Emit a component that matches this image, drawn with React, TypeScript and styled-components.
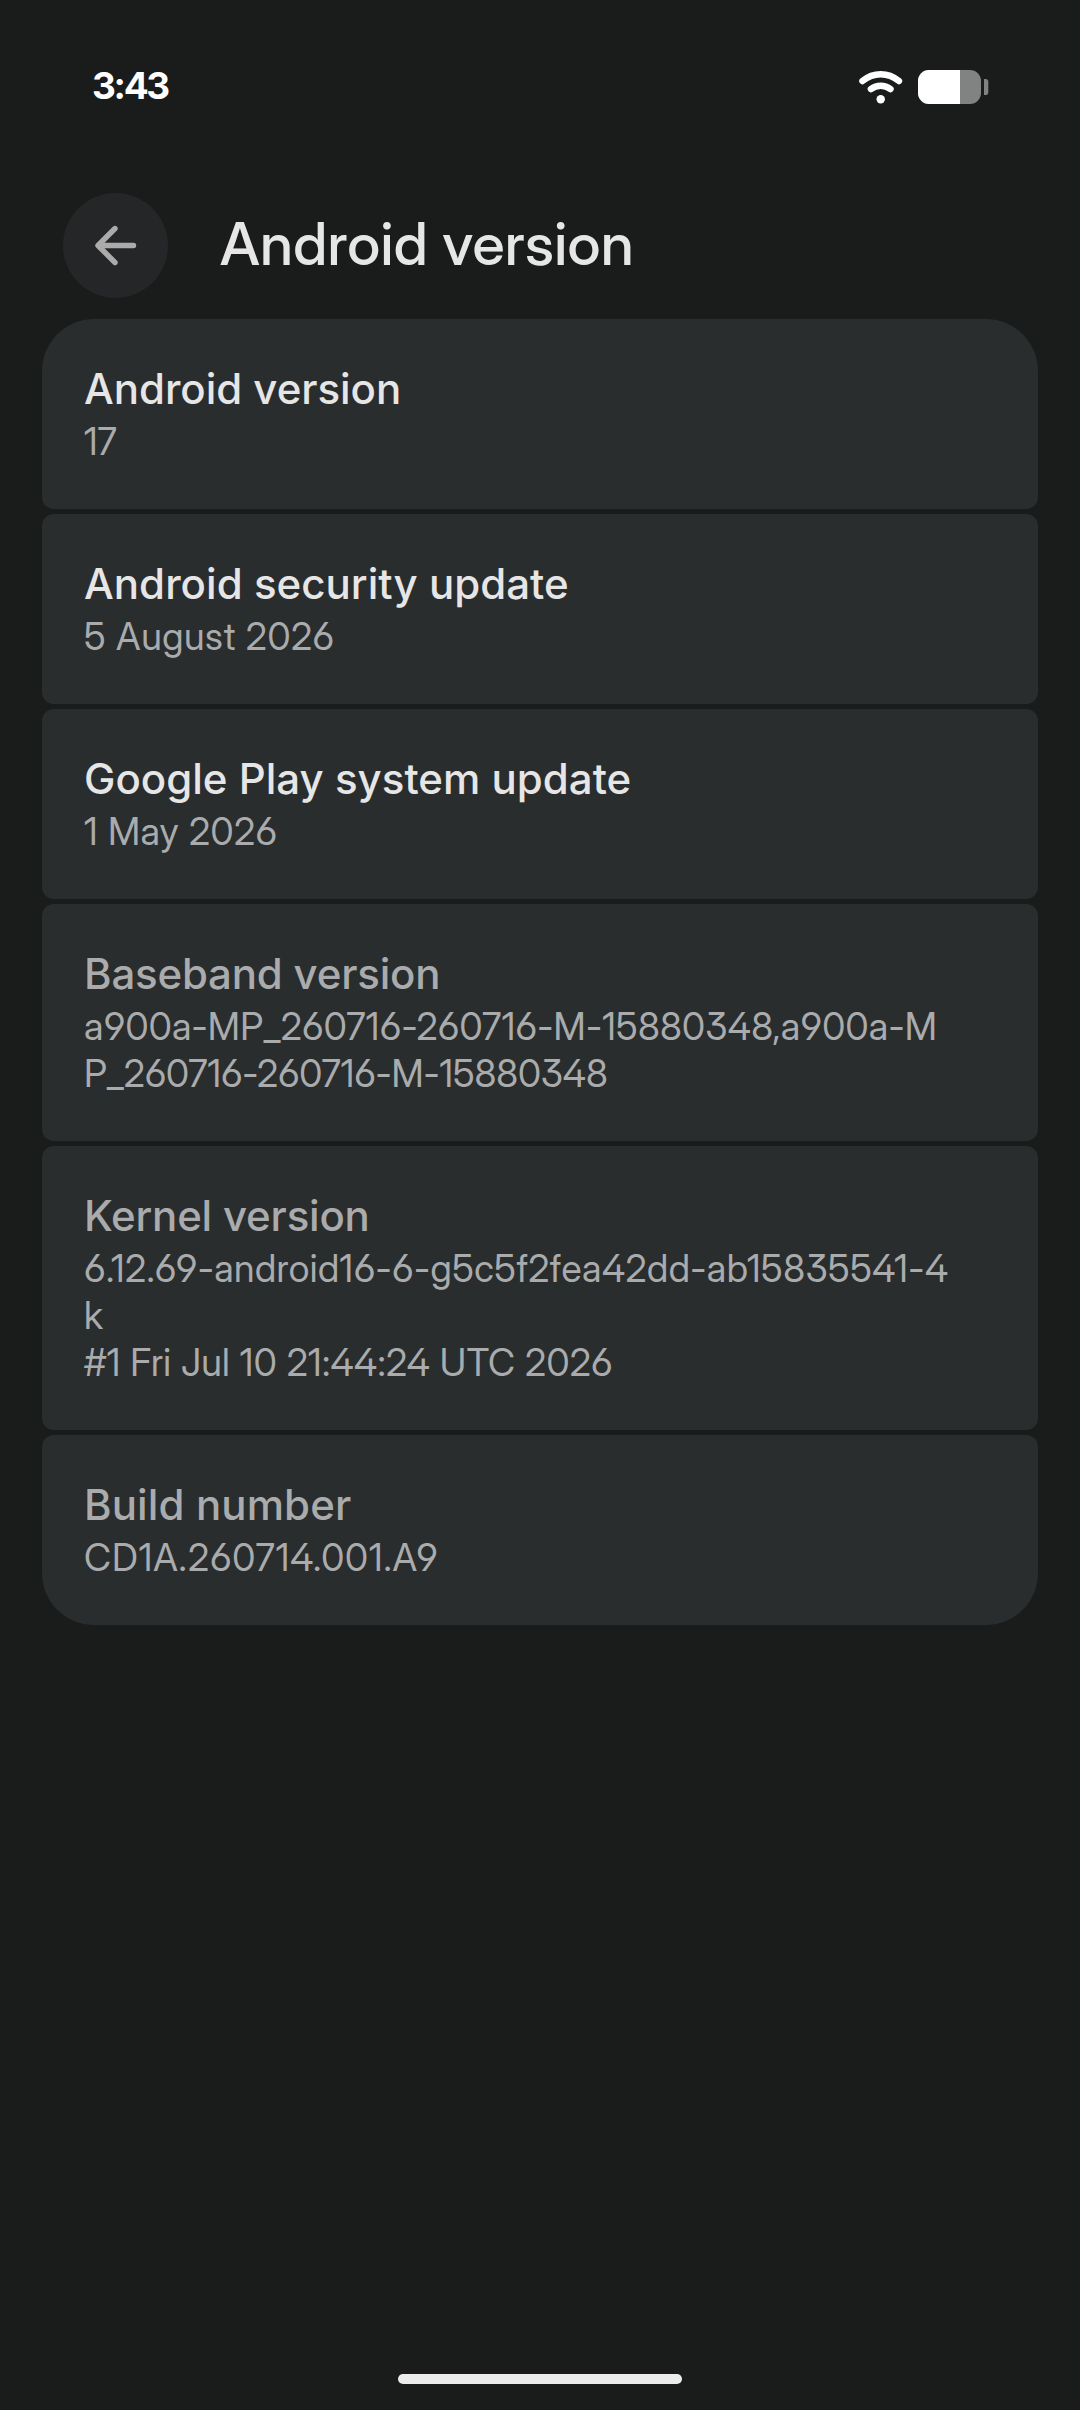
import React from "react";
import styled, { createGlobalStyle } from "styled-components";

const GlobalStyle = createGlobalStyle`
  * { box-sizing: border-box; }
  body { margin: 0; background: #1a1c1b; }
`;

const Screen = styled.div`
  display: flex;
  flex-direction: column;
  width: 1080px;
  height: 2410px;
  background: #1a1c1b;
  color: #e6e6e6;
  font-family: Inter, Roboto, sans-serif;
`;

const StatusBar = styled.header`
  display: flex;
  align-items: center;
  justify-content: space-between;
  height: 174px;
  padding: 0 91px 0 92px;
`;

const Clock = styled.time`
  margin-bottom: 2px;
  color: #fff;
  font-size: 37px;
  font-weight: 700;
  line-height: 40px;
  letter-spacing: -2.3px;
`;

const StatusIcons = styled.div`
  display: flex;
  align-items: center;
  gap: 15px;
`;

const Header = styled.div`
  display: flex;
  align-items: center;
  gap: 52px;
  height: 145px;
  padding: 0 63px 2px;
`;

const BackButton = styled.button`
  display: grid;
  place-items: center;
  width: 105px;
  height: 105px;
  padding: 0;
  border: 0;
  border-radius: 50%;
  background: #252628;
`;

const Title = styled.h1`
  margin: 0;
  padding-bottom: 3px;
  font-family: "Inter Display", Inter, sans-serif;
  font-size: 59px;
  font-weight: 500;
  line-height: 72px;
  letter-spacing: 0.25px;
`;

const List = styled.ul`
  display: flex;
  flex-direction: column;
  gap: 5px;
  margin: 0;
  padding: 0 42px;
  list-style: none;
`;

const Row = styled.li`
  display: flex;
  flex-direction: column;
  padding: 41px 42px 44px;
  border-radius: 12px;
  background: #2a2d2e;

  &:first-child {
    border-top-left-radius: 52px;
    border-top-right-radius: 52px;
  }

  &:last-child {
    border-bottom-left-radius: 52px;
    border-bottom-right-radius: 52px;
  }
`;

const Label = styled.span<{ $muted?: boolean; $track: number }>`
  color: ${(p) => (p.$muted ? "#a9abac" : "#e6e6e6")};
  font-size: 42px;
  font-weight: 500;
  line-height: 58px;
  letter-spacing: ${(p) => p.$track}px;
`;

const Value = styled.span<{ $track: number }>`
  color: #a9abac;
  font-family: "Inter Display", Inter, sans-serif;
  font-size: 37.5px;
  line-height: 47px;
  font-feature-settings: "ss01";
  white-space: pre;
  letter-spacing: ${(p) => p.$track}px;
`;

const HomeIndicator = styled.div`
  width: 284px;
  height: 10px;
  margin: auto auto 26px;
  border-radius: 5px;
  background: #ececec;
`;

type Line = { text: string; track: number };
type Entry = { label: string; track: number; muted?: boolean; lines: Line[] };

const entries: Entry[] = [
  { label: "Android version", track: -0.03, lines: [{ text: "17", track: 0 }] },
  { label: "Android security update", track: 0.04, lines: [{ text: "5 August 2026", track: 0.55 }] },
  { label: "Google Play system update", track: 0.02, lines: [{ text: "1 May 2026", track: 0.48 }] },
  {
    label: "Baseband version",
    track: -0.2,
    muted: true,
    lines: [
      { text: "a900a-MP_260716-260716-M-15880348,a900a-M", track: 0.24 },
      { text: "P_260716-260716-M-15880348", track: -0.12 },
    ],
  },
  {
    label: "Kernel version",
    track: -0.2,
    muted: true,
    lines: [
      { text: "6.12.69-android16-6-g5c5f2fea42dd-ab15835541-4", track: 0.44 },
      { text: "k", track: 0 },
      { text: "#1 Fri Jul 10 21:44:24 UTC 2026", track: 0.3 },
    ],
  },
  { label: "Build number", track: 0.12, muted: true, lines: [{ text: "CD1A.260714.001.A9", track: 0.9 }] },
];

function WifiIcon() {
  return (
    <svg width="44" height="34" viewBox="0 0 44 34" fill="none" stroke="#fff" strokeLinecap="round">
      <path d="M3.4 11C14.5 2 28.9 2 40 11" strokeWidth="6.4" />
      <path d="M11.9 19.1C17.7 14.7 25.7 14.7 31.5 19.1" strokeWidth="6.4" />
      <circle cx="21.7" cy="29.2" r="4.2" fill="#fff" stroke="none" />
    </svg>
  );
}

function BatteryIcon() {
  return (
    <svg width="71" height="34" viewBox="0 0 71 34">
      <clipPath id="cell">
        <rect width="63" height="34" rx="11" />
      </clipPath>
      <g clipPath="url(#cell)">
        <rect width="63" height="34" fill="#818382" />
        <rect width="42" height="34" fill="#fff" />
      </g>
      <path d="M66 9h1.5a2.8 2.8 0 0 1 2.8 2.8v10.4a2.8 2.8 0 0 1-2.8 2.8H66z" fill="#818382" />
    </svg>
  );
}

function BackIcon() {
  return (
    <svg
      width="42"
      height="42"
      viewBox="0 0 42 42"
      fill="none"
      stroke="#ababac"
      strokeWidth="5.4"
      strokeLinecap="round"
      strokeLinejoin="round"
    >
      <path d="M38.5 20.5H3.5M20 3.5L3 20.5L20 37.5" />
    </svg>
  );
}

export default function App() {
  return (
    <Screen>
      <GlobalStyle />
      <StatusBar>
        <Clock>3:43</Clock>
        <StatusIcons>
          <WifiIcon />
          <BatteryIcon />
        </StatusIcons>
      </StatusBar>
      <Header>
        <BackButton aria-label="Back">
          <BackIcon />
        </BackButton>
        <Title>Android version</Title>
      </Header>
      <List>
        {entries.map((entry) => (
          <Row key={entry.label}>
            <Label $muted={entry.muted} $track={entry.track}>
              {entry.label}
            </Label>
            {entry.lines.map((line) => (
              <Value key={line.text} $track={line.track}>
                {line.text}
              </Value>
            ))}
          </Row>
        ))}
      </List>
      <HomeIndicator />
    </Screen>
  );
}
